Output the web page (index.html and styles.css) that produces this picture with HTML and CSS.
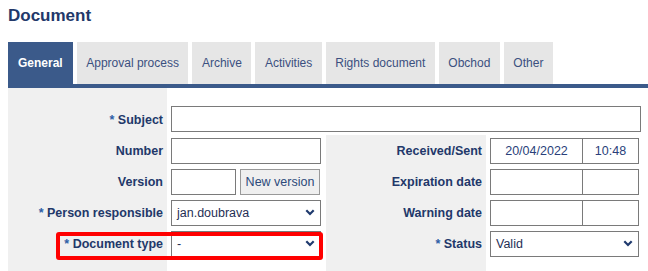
FILE: index.html
```html
<!DOCTYPE html>
<html lang="en">
<head>
  <meta charset="UTF-8">
  <title>Document</title>
  <link rel="stylesheet" href="styles.css">
</head>
<body>
  <h1 class="title">Document</h1>

  <div class="tabs">
    <span class="tab active">General</span>
    <span class="tab">Approval process</span>
    <span class="tab">Archive</span>
    <span class="tab">Activities</span>
    <span class="tab">Rights document</span>
    <span class="tab">Obchod</span>
    <span class="tab">Other</span>
  </div>

  <div class="form">
    <!-- row 1 -->
    <div class="lbl first"><span class="req">*</span>&nbsp;Subject</div>
    <div class="cell first wide"><input class="inp subject" type="text"></div>

    <!-- row 2 -->
    <div class="lbl">Number</div>
    <div class="cell"><input class="inp number" type="text"></div>
    <div class="lbl">Received/Sent</div>
    <div class="cell">
      <div class="pair">
        <span class="date">20/04/2022</span>
        <span class="time">10:48</span>
      </div>
    </div>

    <!-- row 3 -->
    <div class="lbl">Version</div>
    <div class="cell">
      <input class="inp version" type="text">
      <button class="btn">New version</button>
    </div>
    <div class="lbl">Expiration date</div>
    <div class="cell">
      <div class="pair"><span class="date"></span><span class="time"></span></div>
    </div>

    <!-- row 4 -->
    <div class="lbl"><span class="req">*</span>&nbsp;Person responsible</div>
    <div class="cell">
      <div class="select">
        <span>jan.doubrava</span>
        <svg width="10" height="7" viewBox="0 0 10 7"><polyline points="1.3,1.3 5,5 8.7,1.3" fill="none" stroke="currentColor" stroke-width="2.2"/></svg>
      </div>
    </div>
    <div class="lbl">Warning date</div>
    <div class="cell">
      <div class="pair"><span class="date"></span><span class="time"></span></div>
    </div>

    <!-- row 5 -->
    <div class="lbl"><span class="req">*</span>&nbsp;Document type</div>
    <div class="cell">
      <div class="select">
        <span>-</span>
        <svg width="10" height="7" viewBox="0 0 10 7"><polyline points="1.3,1.3 5,5 8.7,1.3" fill="none" stroke="currentColor" stroke-width="2.2"/></svg>
      </div>
    </div>
    <div class="lbl"><span class="req">*</span>&nbsp;Status</div>
    <div class="cell">
      <div class="select status">
        <span>Valid</span>
        <svg width="10" height="7" viewBox="0 0 10 7"><polyline points="1.3,1.3 5,5 8.7,1.3" fill="none" stroke="currentColor" stroke-width="2.2"/></svg>
      </div>
    </div>

    <!-- row 6 (cut off) -->
    <div class="lbl"></div>
    <div class="cell"></div>
    <div class="lbl"></div>
    <div class="cell"></div>

    <div class="highlight"></div>
  </div>
</body>
</html>
```

FILE: styles.css
```css
body {
  margin: 0;
  padding: 0 0 0 8px;
  font-family: "Liberation Sans", Arial, sans-serif;
  font-size: 12px;
  color: #22386a;
  background: #fff;
  overflow: hidden;
}

.title {
  margin: 0 0 16px;
  padding-top: 6px;
  font-size: 17px;
  line-height: 20px;
  font-weight: bold;
  color: #22386a;
}

/* tabs */
.tabs {
  display: flex;
  gap: 4px;
  border-bottom: 4px solid #3b5a8a;
}
.tab {
  height: 42px;
  line-height: 42px;
  padding: 0 9.5px;
  background: #e6e6e6;
  color: #3b5080;
}
.tab.active {
  padding: 0 10px;
  background: #3b5a8a;
  color: #fff;
  font-weight: bold;
}

/* form table */
.form {
  position: relative;
  display: grid;
  grid-template-columns: 159px 159px 160px 162px;
  grid-template-rows: 47px 31px 31px 31px 31px 12px;
}
.lbl {
  background: #f0f0f0;
  display: flex;
  align-items: center;
  justify-content: flex-end;
  padding-right: 4px;
  font-weight: bold;
  font-size: 12.5px;
  color: #22386a;
  white-space: nowrap;
}
.req {
  color: #2d5ea6;
}
.cell {
  background: #fff;
  display: flex;
  align-items: center;
  padding-left: 4px;
  gap: 4px;
}
.lbl.first,
.cell.first {
  align-items: flex-end;
  padding-bottom: 3px;
}
.lbl.first {
  padding-bottom: 8px;
}
.cell.wide {
  grid-column: 2 / 5;
}

.inp {
  box-sizing: border-box;
  height: 26px;
  border: 1px solid #7a7a7a;
  margin: 0;
  padding: 0 4px;
  font: inherit;
  background: #fff;
}
.subject { width: 470px; }
.number { width: 150px; }
.version { width: 65px; }

.btn {
  box-sizing: border-box;
  width: 80px;
  height: 26px;
  margin: 0;
  padding: 0;
  border: 1px solid #999;
  background: #efefef;
  font: inherit;
  font-size: 12.5px;
  color: #2c4a7a;
}

.select {
  box-sizing: border-box;
  width: 150px;
  height: 26px;
  border: 1px solid #7a7a7a;
  display: flex;
  align-items: center;
  justify-content: space-between;
  padding: 0 5px;
  font-size: 12.5px;
  color: #1f2f55;
}
.select svg {
  color: #1f3a6e;
}
.select.status {
  width: 149px;
}

.pair {
  box-sizing: border-box;
  width: 149px;
  height: 26px;
  border: 1px solid #7a7a7a;
  display: flex;
  font-size: 12.5px;
}
.pair span {
  display: flex;
  align-items: center;
  justify-content: center;
  color: #2a3f7a;
}
.date {
  width: 91px;
  border-right: 1px solid #7a7a7a;
}
.time {
  flex: 1;
}

.highlight {
  position: absolute;
  left: 48px;
  top: 144px;
  width: 267px;
  height: 28px;
  box-sizing: border-box;
  border: 4px solid #ff0000;
  border-radius: 3px;
}
```
